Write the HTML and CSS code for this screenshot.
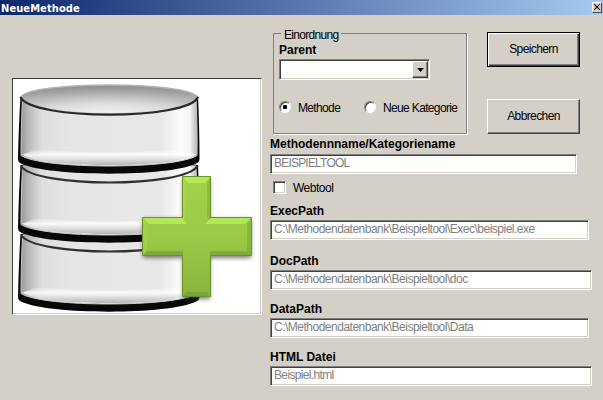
FILE: index.html
```html
<!DOCTYPE html>
<html lang="de">
<head>
<meta charset="utf-8">
<title>NeueMethode</title>
<link rel="stylesheet" href="styles.css">
</head>
<body>
<header class="titlebar">
  <h1 class="title">NeueMethode</h1>
  <button class="close" aria-label="Schließen"><svg width="6" height="6" viewBox="0 0 6 6"><path d="M.3.3 5.7 5.7M5.7.3.3 5.7" stroke="#111" stroke-width="1.1"/></svg></button>
</header>
<main class="dialog">
  <div class="picture">
    <svg width="248" height="235" viewBox="13 79 248 235">
      <defs>
        <linearGradient id="side" x1="0" x2="1" y1="0" y2="0">
          <stop offset="0" stop-color="#999"/><stop offset=".04" stop-color="#b8b8b8"/><stop offset=".12" stop-color="#dfdfdf"/><stop offset=".3" stop-color="#e6e6e6"/><stop offset=".8" stop-color="#e8e8e8"/><stop offset=".91" stop-color="#fdfdfd"/><stop offset=".96" stop-color="#f4f4f4"/><stop offset="1" stop-color="#b5b5b5"/>
        </linearGradient>
        <radialGradient id="lid" cx=".5" cy="1" r="1">
          <stop offset="0" stop-color="#f6f6f6"/><stop offset=".4" stop-color="#dadada"/><stop offset=".8" stop-color="#a4a4a4"/><stop offset="1" stop-color="#8c8c8c"/>
        </radialGradient>
        <linearGradient id="rim" x1="0" x2="0" y1="0" y2="1">
          <stop offset="0" stop-color="#fff" stop-opacity="0"/><stop offset=".35" stop-color="#fff" stop-opacity=".8"/><stop offset="1" stop-color="#b4b4b4"/>
        </linearGradient>
        <linearGradient id="green" x1="0" x2="0" y1="0" y2="1">
          <stop offset="0" stop-color="#a3d349"/><stop offset=".5" stop-color="#9aca48"/><stop offset="1" stop-color="#88b33d"/>
        </linearGradient>
        <filter id="soft" x="-20%" y="-20%" width="140%" height="140%"><feGaussianBlur stdDeviation="2"/></filter>
        <g id="drum">
          <path d="M20.500 96Q18.500 130 18 159Q18 162 21 163.500C48 177 170 177 196 163.500Q199.500 162 199.500 159Q199.500 130 198 96Q109 84 20.500 96Z" fill="#080808"/>
          <path d="M22.500 97Q21 130 21 155.500C42 169.500 176 169.500 197 155.500Q197.500 130 196 97Q109 88 22.500 97Z" fill="url(#side)" stroke="#c9c9c9"/>
          <path d="M22 154.500Q29 153 36 149Q108 156 181 149Q190 153 196 154.500C176 168.500 42 168.500 22 154.500Z" fill="url(#rim)"/>
          <path d="M21 97C35 119 184 119 197.500 97" fill="none" stroke="#303030" stroke-width="2.200"/>
        </g>
      </defs>
      <use href="#drum" y="138"/>
      <use href="#drum" y="69"/>
      <path d="M18.500 108V90Q109 70 199.500 90V108L197 96Q109 84 21 96Z" fill="#fff"/>
      <use href="#drum"/>
      <path d="M18 94V84H200V94L197.500 97C188 80.500 30 80.500 21 97Z" fill="#fff"/>
      <path d="M21 97C30 81 188 81 197.500 97C188 120 30 120 21 97Z" fill="url(#lid)"/>
      <path d="M21 97C30 81 188 81 197.500 97" fill="none" stroke="#b5b5b5" stroke-width="1.500"/>
      <path d="M23 99.500C37 118 181 118 195.500 99.500" fill="none" stroke="#d0d0d0"/>
      <path d="M20.500 97C31 120.500 188 120.500 198 97" fill="none" stroke="#292929" stroke-width="2.200"/>
      <path d="M183 179h27v40h41v39h-41v41h-27v-41h-40v-39h40z" fill="#333" opacity=".65" filter="url(#soft)"/>
      <path d="M182.500 176.500h28v41h41v38h-41v41h-28v-41h-40v-38h40z" fill="url(#green)" stroke="#6b902d"/>
      <path d="M183 177h27l-5 6h-17zM143 218h39l5 6h-38zM211 218h40l-6 6h-40z" fill="#b8ed5b" opacity=".8"/>
      <path d="M143 218l4 6v27l-4 4zM183 177l3 6v35l-3 2z" fill="#b0dc62" opacity=".35"/>
      <path d="M251 218l-4 6v27l4 4zM210 177l-3 6v35l3 2z" fill="#719b2c" opacity=".4"/>
      <path d="M143 255l4-4h36v4zM210 251h37l4 4h-41zM183 296l3-4h21l3 4z" fill="#6d942e" opacity=".5"/>
    </svg>
  </div>
  <form class="form">
    <div class="top">
      <fieldset class="group">
        <legend class="legend">Einordnung</legend>
        <div class="label parent">Parent</div>
        <div class="combo"><span class="arrow"><svg width="7" height="4" viewBox="0 0 7 4"><path d="M0 0h7L3.500 4z"/></svg></span></div>
        <div class="radios">
          <span class="radio on"></span><span class="t-methode">Methode</span>
          <span class="radio"></span><span class="t-kategorie">Neue Kategorie</span>
        </div>
      </fieldset>
      <div class="buttons">
        <button type="button" class="btn default">Speichern</button>
        <button type="button" class="btn">Abbrechen</button>
      </div>
    </div>
    <div class="label">Methodennname/Kategoriename</div>
    <div class="field w-name v-name">BEISPIELTOOL</div>
    <div class="check"><span class="box"></span><span>Webtool</span></div>
    <div class="label">ExecPath</div>
    <div class="field w-narrow">C:\Methodendatenbank\Beispieltool\Exec\beispiel.exe</div>
    <div class="label l-doc">DocPath</div>
    <div class="field w-wide">C:\Methodendatenbank\Beispieltool\doc</div>
    <div class="label l-data">DataPath</div>
    <div class="field w-narrow">C:\Methodendatenbank\Beispieltool\Data</div>
    <div class="label l-html">HTML Datei</div>
    <div class="field w-wide v-html">Beispiel.html</div>
  </form>
</main>
</body>
</html>
```
FILE: styles.css
```css
* { box-sizing: border-box; }
body {
  margin: 0;
  width: 603px;
  height: 400px;
  overflow: hidden;
  background: #d4d0c8;
  font: 12px/14px "Liberation Sans", Arial, sans-serif;
  letter-spacing: -.5px;
  color: #000;
}
.titlebar {
  display: flex;
  justify-content: space-between;
  align-items: center;
  height: 15px;
  padding: 0 1px 0 1px;
  background: linear-gradient(90deg, #0c276d, #a6caf0);
}
.title {
  margin: 1px 0 0;
  font: bold 11px/15px "DejaVu Sans Condensed", "DejaVu Sans", sans-serif;
  letter-spacing: .1px;
  color: #fff;
}
.close {
  display: flex;
  align-items: center;
  justify-content: center;
  width: 10px;
  height: 11px;
  margin-top: -1px;
  padding: 0;
  background: #d4d0c8;
  border: 1px solid;
  border-color: #fff #404040 #404040 #fff;
}
.dialog { display: flex; align-items: flex-start; }
.picture {
  flex: none;
  width: 250px;
  height: 237px;
  margin: 63px 8px 0 12px;
  background: #fff;
  border: 1px solid;
  border-color: #404040 #fff #fff #404040;
  box-shadow: inset -1px -1px #d4d0c8;
}
.picture svg { display: block; }
.form { width: 333px; }
.top { display: flex; height: 122px; padding: 17px 0 0 3px; }
.group {
  width: 194px;
  height: 108px;
  min-width: 0;
  margin: -6px 0 0;
  padding: 0 0 0 5px;
  border: 1px solid #808080;
  box-shadow: 1px 1px #fff;
}
.legend {
  height: 14px;
  margin-left: 2px;
  padding: 0 3px;
  line-height: 18px;
  letter-spacing: -.7px;
  background: #d4d0c8;
}
.label {
  height: 14px;
  font-weight: bold;
  letter-spacing: 0;
  white-space: nowrap;
}
.parent { margin: 3px 0 2px; }
.combo {
  display: flex;
  justify-content: flex-end;
  width: 151px;
  height: 21px;
  background: #fff;
  border: 1px solid;
  border-color: #808080 #fff #fff #808080;
  box-shadow: inset 1px 1px #404040, inset -1px -1px #d4d0c8;
  padding: 1px;
}
.arrow {
  display: flex;
  align-items: center;
  justify-content: center;
  width: 16px;
  height: 17px;
  background: #d4d0c8;
  border: 1px solid;
  border-color: #fff #404040 #404040 #fff;
  box-shadow: inset -1px -1px #808080;
}
.radios { display: flex; align-items: center; margin-top: 20px; height: 14px; white-space: nowrap; letter-spacing: -.65px; }
.radio {
  flex: none;
  width: 12px;
  height: 12px;
  margin-right: 7px;
  border-radius: 50%;
  background: #fff;
  border: 1px solid;
  border-color: #808080 #fff #fff #808080;
  box-shadow: inset 1px 1px #404040;
}
.on { background: radial-gradient(circle, #000 0 2px, #fff 2.500px); }
.t-methode { width: 66px; }
.t-methode, .t-kategorie { padding-top: 1px; }
.buttons { display: flex; flex-direction: column; gap: 32px; margin-left: 20px; }
.btn {
  width: 93px;
  height: 35px;
  padding: 0 0 2px;
  background: #d4d0c8;
  border: 1px solid;
  border-color: #fff #404040 #404040 #fff;
  box-shadow: inset -1px -1px #808080;
  font: 12px/14px "Liberation Sans", Arial, sans-serif;
  letter-spacing: -.6px;
  color: #000;
}
.default { border-color: #000; box-shadow: inset 1px 1px #fff, inset -1px -1px #404040, inset -2px -2px #808080; }
.field {
  height: 20px;
  padding: 0 0 0 3px;
  background: #fff;
  border: 1px solid;
  border-color: #808080 #fff #fff #808080;
  box-shadow: inset 1px 1px #404040, inset -1px -1px #d4d0c8;
  line-height: 17px;
  color: #808080;
  white-space: nowrap;
}
.w-name { width: 307px; margin-top: 3px; }
.w-narrow { width: 319px; margin-top: 2px; }
.w-wide { width: 322px; margin-top: 2px; }
.v-name { letter-spacing: -.8px; }
.v-html { letter-spacing: -.65px; }
.check { display: flex; align-items: center; height: 14px; margin: 7px 0 9px 3px; }
.box {
  width: 13px;
  height: 13px;
  margin: -1px 7px 0 0;
  background: #fff;
  border: 1px solid;
  border-color: #808080 #fff #fff #808080;
  box-shadow: inset 1px 1px #404040, inset -1px -1px #d4d0c8;
}
.l-doc { margin-top: 14px; }
.l-data, .l-html { margin-top: 12px; }
```
